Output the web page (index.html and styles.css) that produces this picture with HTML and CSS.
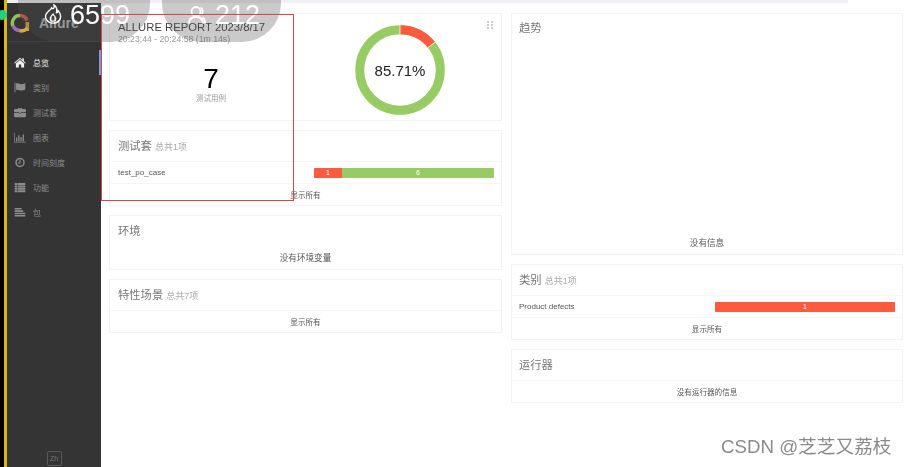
FILE: index.html
```html
<!DOCTYPE html>
<html lang="zh">
<head>
<meta charset="utf-8">
<title>Allure Report</title>
<link rel="stylesheet" href="styles.css">
</head>
<body>
<div class="app">
  <div class="edge-black"></div>
  <div class="edge-yellow"></div>
  <aside class="side">
    <div class="brand">
      <svg class="logo" viewBox="0 0 20 20" width="20" height="20">
        <path d="M10 2.600a7.400 7.400 0 0 1 7 5" fill="none" stroke="#e4553b" stroke-width="3.500"/>
        <path d="M17.300 9v9" fill="none" stroke="#d9a63c" stroke-width="3.500"/>
        <path d="M17.300 15A7.400 7.400 0 0 1 9 17.300" fill="none" stroke="#d9a63c" stroke-width="3.500"/>
        <path d="M9.500 17.400A7.400 7.400 0 0 1 3.200 13" fill="none" stroke="#a06cb8" stroke-width="3.500"/>
        <path d="M3 13A7.400 7.400 0 0 1 10 2.600" fill="none" stroke="#8fc15f" stroke-width="3.500"/>
      </svg>
      <span class="brand-name">Allure</span>
    </div>
    <nav class="nav">
      <a class="nav-item is-active">
        <svg class="ico" viewBox="0 0 14 12"><path d="M7 0.500 0.300 6.300l.7.800L7 2l6 5.100.7-.8-2.200-1.900V1h-1.800v2L7 .5zM2.200 7.200V11.700h3.400V8.200h2.800v3.500h3.400V7.200L7 3.100 2.200 7.200z" fill="currentColor"/></svg>
        <span>总览</span>
      </a>
      <a class="nav-item">
        <svg class="ico" viewBox="0 0 14 12"><path d="M0.600 0.500h1.100v11H.6zM2.400 1.400c2.500-1 3.900.7 6 .7 1.500 0 3-.5 4.800-1.200v7.400c-1.800.9-3.200 1.300-4.800 1.300-2.200 0-3.600-1.600-6-.7z" fill="currentColor"/></svg>
        <span>类别</span>
      </a>
      <a class="nav-item">
        <svg class="ico" viewBox="0 0 14 12"><path d="M4.500 2V.8h5V2H13c.5 0 .9.4.9.9v2.900H8.200v1H5.800v-1H.1V2.900C.1 2.400.5 2 1 2h3.500zm1 0h3V1.700h-3zM.1 6.500h5.700v1h2.400v-1h5.700v4c0 .5-.4.9-.9.9H1c-.5 0-.9-.4-.9-.9z" fill="currentColor"/></svg>
        <span>测试套</span>
      </a>
      <a class="nav-item">
        <svg class="ico" viewBox="0 0 14 12"><path d="M.3.500h.8v10.400h12.700v.8H.3zM2.300 6h1.500v4.300H2.300zM4.900 3.500h1.500v6.800H4.900zM7.500 5.500H9v4.800H7.500zM10.100 2.500h1.500v7.800h-1.500z" fill="currentColor"/></svg>
        <span>图表</span>
      </a>
      <a class="nav-item">
        <svg class="ico" viewBox="0 0 14 12"><circle cx="7" cy="6" r="4.700" fill="none" stroke="currentColor" stroke-width="1.700"/><path d="M7 3v3.500H4.500" fill="none" stroke="currentColor" stroke-width="1.200"/></svg>
        <span>时间刻度</span>
      </a>
      <a class="nav-item">
        <svg class="ico" viewBox="0 0 14 12"><path d="M.8.800h2.800v2.200H.8zM4.200.800h9v2.200h-9zM.8 3.600h2.800v2.200H.8zM4.200 3.600h9v2.200h-9zM.8 6.400h2.800v2.200H.8zM4.200 6.400h9v2.200h-9zM.8 9.200h2.800v2.200H.8zM4.200 9.200h9v2.200h-9z" fill="currentColor"/></svg>
        <span>功能</span>
      </a>
      <a class="nav-item">
        <svg class="ico" viewBox="0 0 14 12"><path d="M.8.800h8v1.800h-8zM.8 3.500h10v1.800H.8zM.8 6.200h12.400V8H.8zM.8 9h12.400v1.800H.8z" fill="currentColor"/></svg>
        <span>包</span>
      </a>
    </nav>
    <div class="lang"><span class="lang-btn">Zh</span></div>
  </aside>

  <main class="main">
    <div class="col">
      <section class="card card-summary">
        <div class="summary-left">
          <div class="report-title">ALLURE REPORT 2023/8/17</div>
          <div class="report-time">20:23:44 - 20:24:58 (1m 14s)</div>
          <div class="count">7</div>
          <div class="count-label">测试用例</div>
        </div>
        <div class="summary-right">
          <svg class="donut" viewBox="0 0 90 90" width="90" height="90">
            <circle cx="45" cy="45" r="40.300" fill="none" stroke="#97cc64" stroke-width="9"/>
            <path d="M45 4.700A40.300 40.300 0 0 1 76.500 19.900" fill="none" stroke="#fd5a3e" stroke-width="9"/>
            <path d="M45 0v9M80.200 17 73 22.700" stroke="#fff" stroke-width=".8" fill="none"/>
            <text class="donut-text" x="45" y="50.500" text-anchor="middle">85.71%</text>
          </svg>
          <svg class="grip" viewBox="0 0 6 8" width="6" height="8"><path d="M0 0h2v2H0zM4 0h2v2H4zM0 3h2v2H0zM4 3h2v2H4zM0 6h2v2H0zM4 6h2v2H4z" fill="#ccc"/></svg>
        </div>
      </section>

      <section class="card">
        <h2 class="card-title">测试套 <small>总共1项</small></h2>
        <div class="row">
          <span class="row-name">test_po_case</span>
          <div class="bar">
            <span class="seg seg-red" style="width:15.500%">1</span>
            <span class="seg seg-green" style="width:84.500%">6</span>
          </div>
        </div>
        <div class="foot">显示所有</div>
      </section>

      <section class="card">
        <h2 class="card-title">环境</h2>
        <div class="foot foot-plain">没有环境变量</div>
      </section>

      <section class="card">
        <h2 class="card-title">特性场景 <small>总共7项</small></h2>
        <div class="foot">显示所有</div>
      </section>
    </div>

    <div class="col col-right">
      <section class="card card-trend">
        <h2 class="card-title">趋势</h2>
        <div class="foot foot-plain">没有信息</div>
      </section>

      <section class="card">
        <h2 class="card-title">类别 <small>总共1项</small></h2>
        <div class="row">
          <span class="row-name">Product defects</span>
          <div class="bar">
            <span class="seg seg-red" style="width:100%">1</span>
          </div>
        </div>
        <div class="foot">显示所有</div>
      </section>

      <section class="card">
        <h2 class="card-title">运行器</h2>
        <div class="foot">没有运行器的信息</div>
      </section>
    </div>
  </main>
</div>

<div class="top-strip"></div>
<div class="dot"></div>
<div class="pill pill-a">
  <svg class="pill-ico" viewBox="0 0 20 22" width="20" height="20"><path d="M11 1c1 3.500-1 5-2.500 3.200C8 6 4.500 8 2.500 11c-2.200 4.500 1.500 10 7.500 10s9.500-4.500 8-9.500c-.5-2-1.500-3-2.300-4.200-.3 1.500-1 2.500-2 2.500C14.500 6.500 14 3 11 1z" fill="none" stroke="#fff" stroke-width="1.500"/><path d="M10 11c-1 1.500-3 3-3 5a3 3 0 0 0 6 0c0-2-2-3-3-5z" fill="none" stroke="#fff" stroke-width="1.300"/></svg>
  <span>6599</span>
</div>
<div class="pill pill-b">
  <svg class="pill-ico" viewBox="0 0 18 18" width="18" height="18">
    <circle cx="8" cy="5.500" r="4.500" fill="none" stroke="#fff" stroke-width="1.800"/>
    <path d="M1 17.500C1 13 4 11 8 11s7 2 7 6.500" fill="none" stroke="#fff" stroke-width="1.800"/>
    <path d="M12.500 1.500C15 2.500 15.500 6.500 13.500 8.500" fill="none" stroke="#fff" stroke-width="1.800"/>
    <path d="M14.500 11.500c1.800 1 2.700 3 2.700 6" fill="none" stroke="#fff" stroke-width="1.800"/>
  </svg>
  <span>212</span>
</div>
<div class="red-box"></div>
<div class="watermark">CSDN @芝芝又荔枝</div>
</body>
</html>
```

FILE: styles.css
```css
* { box-sizing: border-box; }
html, body { margin: 0; padding: 0; height: 100%; overflow: hidden; background: #fff; }
body {
  position: relative;
  width: 908px;
  height: 467px;
  font-family: "Liberation Sans", "Noto Sans CJK SC", sans-serif;
  color: #444;
}
.app {
  display: flex;
  width: 908px;
  height: 467px;
  filter: blur(0.35px);
}
.edge-black { width: 4px; background: #000; flex: none; }
.edge-yellow { width: 3px; background: #d8b71c; flex: none; }

/* sidebar */
.side {
  width: 94px;
  flex: none;
  display: flex;
  flex-direction: column;
  background: #343434;
  color: #8d8d8d;
}
.brand {
  height: 42px;
  display: flex;
  align-items: center;
  gap: 9px;
  padding: 4px 0 0 3px;
  border-bottom: 1px solid #414141;
  flex: none;
}
.logo { flex: none; }
.brand-name { font-size: 14px; font-weight: 700; color: #b8b8b8; }
.nav { display: flex; flex-direction: column; padding-top: 8px; flex: none; }
.nav-item {
  height: 25px;
  display: flex;
  align-items: center;
  gap: 7px;
  padding-left: 7px;
  font-size: 8px;
  color: #8d8d8d;
  border-right: 2px solid transparent;
}
.nav-item.is-active { color: #f2f2f2; border-right-color: #6f9fdc; }
.ico { width: 12px; height: 11px; flex: none; }
.lang { margin-top: auto; display: flex; justify-content: center; padding-bottom: 1px; }
.lang-btn {
  width: 15px;
  height: 15px;
  display: flex;
  align-items: center;
  justify-content: center;
  border: 1px solid #585858;
  border-radius: 2px;
  font-size: 7px;
  color: #777;
}

/* main */
.main {
  flex: 1;
  display: grid;
  grid-template-columns: 393px 392px;
  gap: 9px;
  padding: 13px 0 0 8px;
  align-items: start;
}
.col { display: flex; flex-direction: column; gap: 9px; min-width: 0; }
.card {
  border: 1px solid #f3f3f3;
  background: #fff;
  display: flex;
  flex-direction: column;
}
.card-title {
  margin: 0;
  height: 30px;
  padding: 6.500px 0 0 8px;
  font-size: 11.300px;
  line-height: 16px;
  font-weight: 400;
  color: #777;
}
.col-right .card-title { padding-left: 7px; }
.card-title small { font-size: 9px; color: #aaa; }
.row {
  height: 22px;
  display: flex;
  align-items: center;
  padding-left: 8px;
  border-top: 1px solid #f6f6f6;
  font-size: 8px;
  color: #555;
}
.col-right .row { padding-left: 7px; }
.row-name { width: 196px; flex: none; }
.bar {
  width: 180px;
  flex: none;
  height: 10px;
  display: flex;
  border-radius: 1px;
  overflow: hidden;
  font-size: 7px;
  line-height: 10px;
  color: #fff;
  text-align: center;
}
.seg-red { background: #fd5a3e; }
.seg-green { background: #97cc64; }
.foot {
  height: 22px;
  border-top: 1px solid #f6f6f6;
  display: flex;
  align-items: center;
  justify-content: center;
  font-size: 7.600px;
  color: #555;
}
.foot-plain { border-top: 0; height: 23px; padding-bottom: 2px; font-size: 8.600px; }

.card-summary { height: 108px; flex-direction: row; }
.summary-left { width: 204px; flex: none; padding: 7px 0 0 8px; position: relative; }
.report-title { font-size: 11.300px; line-height: 13px; color: #444; white-space: nowrap; }
.report-time { font-size: 8.700px; line-height: 10px; color: #999; white-space: nowrap; }
.count { font-size: 28px; line-height: 30px; color: #000; text-align: center; margin-top: 20px; padding-right: 10px; }
.count-label { font-size: 7.500px; line-height: 10px; color: #999; text-align: center; padding-right: 10px; }
.summary-right { flex: 1; position: relative; padding: 11px 0 0 41px; }
.donut { display: block; }
.donut-text { font-size: 15px; fill: #222; font-family: "Liberation Sans", sans-serif; }
.grip { position: absolute; right: 8px; top: 7px; }

.card-trend { height: 242px; }
.card-trend .card-title { flex: 1; height: auto; padding-top: 5.500px; }

/* overlays from the screen recorder */
.top-strip {
  position: absolute;
  left: 7px;
  top: 0;
  width: 841px;
  height: 3px;
  background: #eef0f3;
}
.dot {
  position: absolute;
  left: -3px;
  top: 10px;
  width: 10px;
  height: 10px;
  border-radius: 50%;
  background: #25d07a;
}
.pill {
  position: absolute;
  top: 0;
  height: 42px;
  border-radius: 0 0 39px 39px;
  background: rgba(80, 80, 80, 0.3);
  display: flex;
  align-items: flex-end;
  gap: 7px;
  padding-bottom: 13px;
  color: #fff;
  font-size: 27px;
  line-height: 28px;
}
.pill-a { left: 18px; width: 132px; padding-left: 25px; }
.pill-b { left: 162px; width: 119px; padding-left: 26px; gap: 9px; }
.pill-ico { flex: none; margin-bottom: 5px; }
.red-box {
  position: absolute;
  left: 101px;
  top: 14px;
  width: 193px;
  height: 187px;
  border: 1px solid #d4474f;
}
.watermark {
  position: absolute;
  left: 721px;
  top: 436px;
  font-size: 18.700px;
  line-height: 22px;
  color: #8b8b8b;
  white-space: nowrap;
}
```
